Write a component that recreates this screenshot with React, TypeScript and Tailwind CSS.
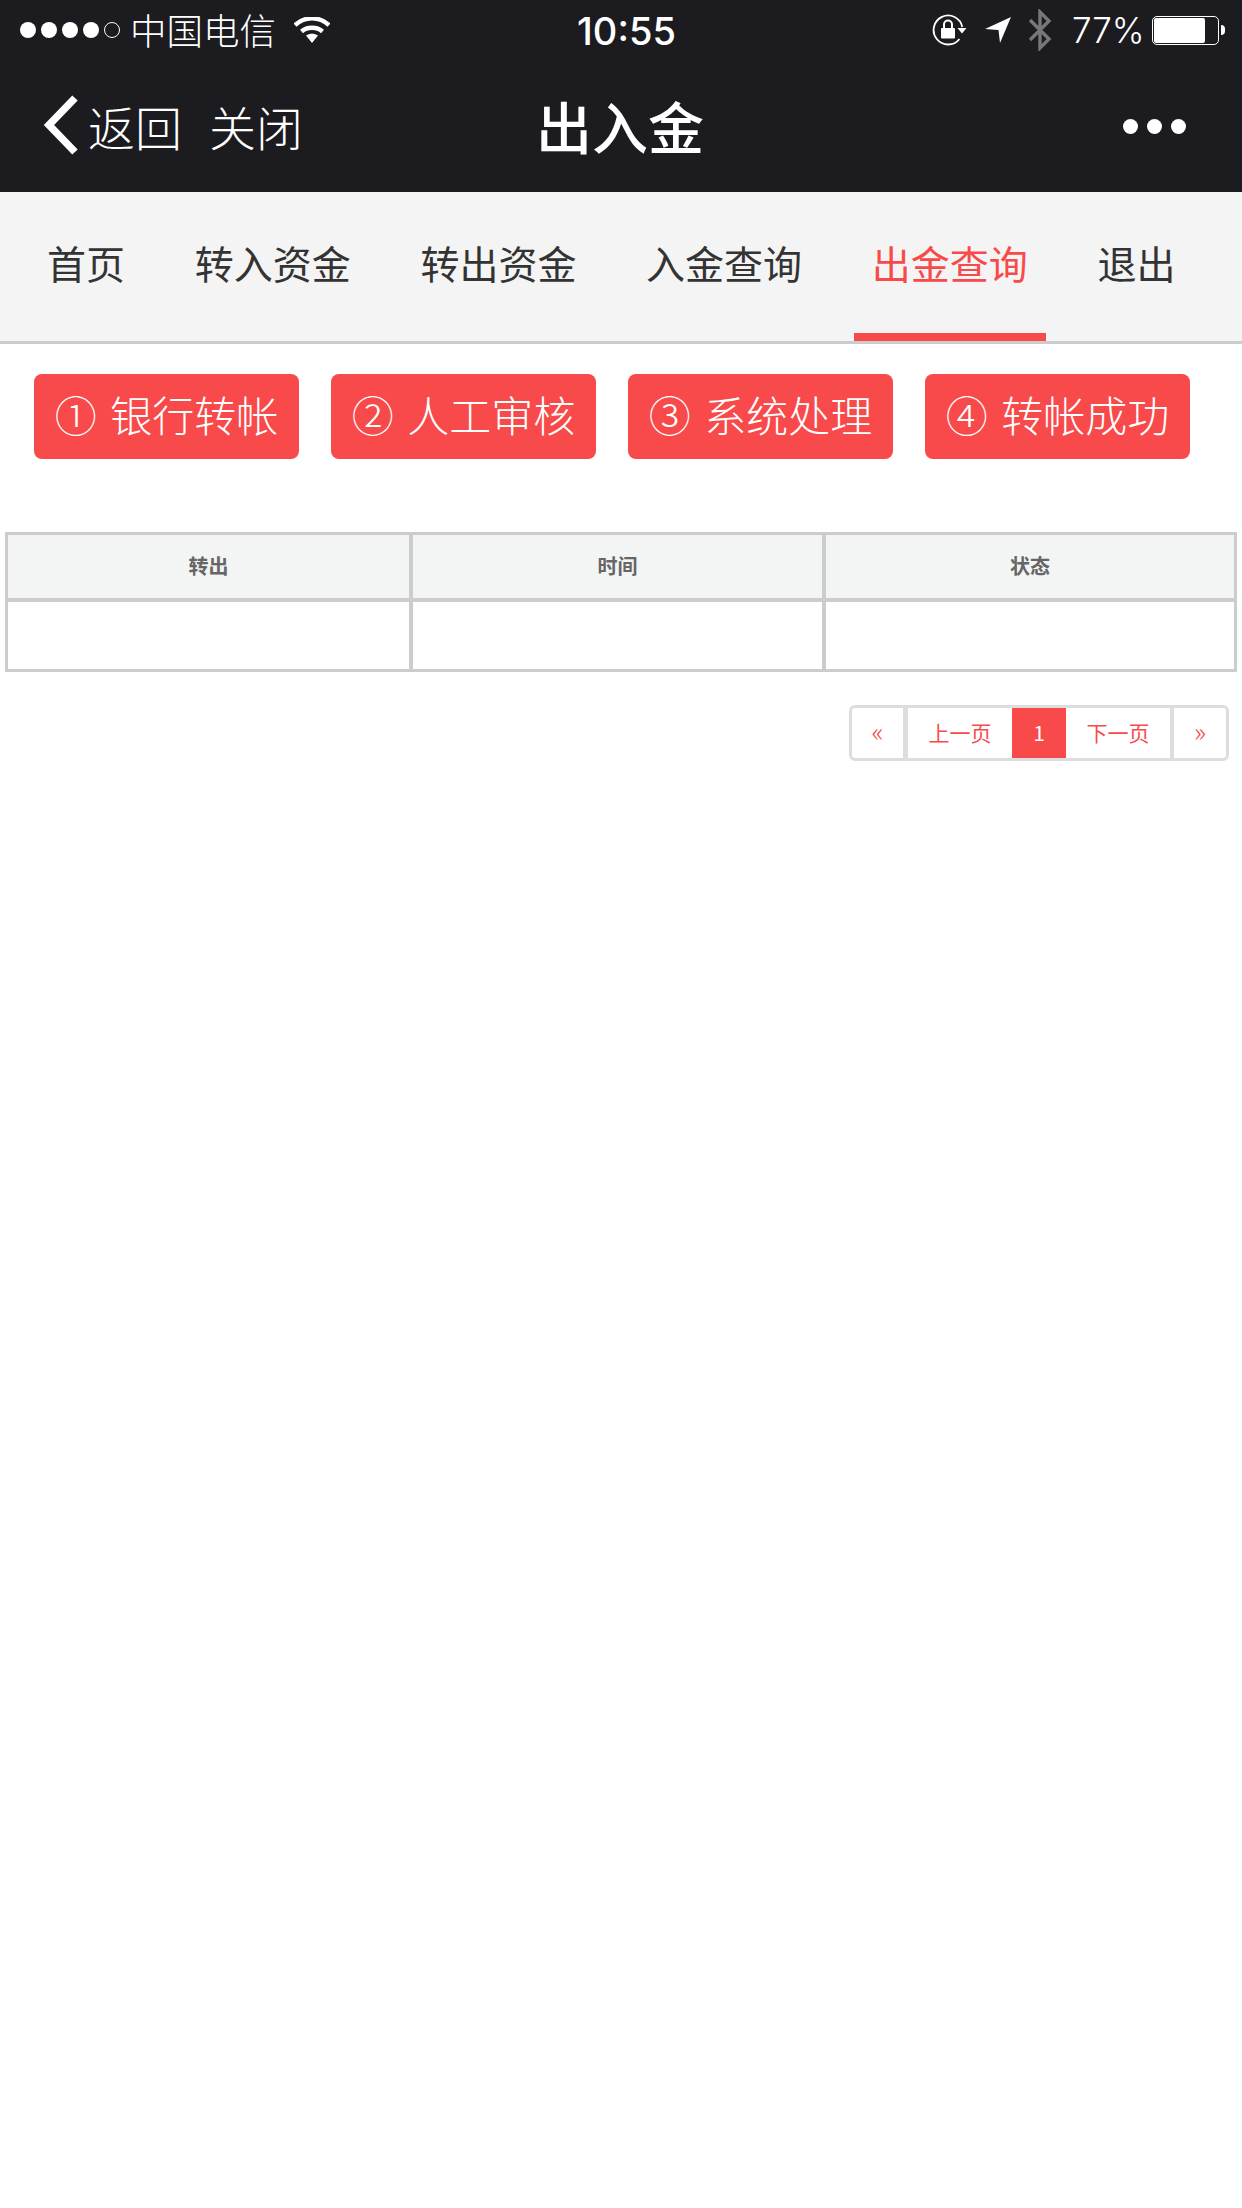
const tabs = ["首页", "转入资金", "转出资金", "入金查询", "出金查询", "退出"];
const steps = ["① 银行转帐", "② 人工审核", "③ 系统处理", "④ 转帐成功"];

const StatusIcons = () => (
  <div className="flex items-center">
    {/* rotation lock */}
    <svg width="36" height="32" viewBox="0 0 36 32">
      <path d="M27.5 25 A14.5 14.5 0 1 1 30.3 13" fill="none" stroke="#fff" strokeWidth="1.8" />
      <path d="M25.5 14 L34.5 14 L30 19.5 Z" fill="#fff" />
      <rect x="9" y="14" width="14" height="10.5" rx="1" fill="#fff" />
      <path d="M12 14 V10.5 a4 4 0 0 1 8 0 V14" fill="none" stroke="#fff" strokeWidth="2" />
    </svg>
    {/* location */}
    <svg width="26" height="26" viewBox="0 0 26 26" className="ml-[17px]">
      <path d="M26 0 L15 26 L13.5 13 L0 12 Z" fill="#fff" />
    </svg>
    {/* bluetooth */}
    <svg width="24" height="42" viewBox="0 0 24 42" className="ml-[17px]">
      <path d="M2 11 L21 30 L12 39 V3 L21 12 L2 31" fill="none" stroke="#77777a" strokeWidth="3.4" />
    </svg>
    <span className="ml-[20px] w-[71px] whitespace-nowrap font-['Inter',sans-serif] text-[35px] font-light leading-none">
      77%
    </span>
    {/* battery */}
    <div className="ml-[9px] flex h-[29px] w-[67px] rounded-[5px] border border-white p-[1px]">
      <div className="h-full w-[51px] rounded-[2px] bg-white" />
    </div>
    <div className="ml-[2px] h-[10px] w-[4px] rounded-r-full bg-white" />
  </div>
);

export default function App() {
  return (
    <div className="min-h-[2208px] bg-white font-['Noto_Sans_CJK_SC',sans-serif]">
      {/* header */}
      <div className="h-[192px] bg-[#1b1b20] text-white">
        <div className="grid h-[60px] grid-cols-3 items-center pl-[20px] pr-[17px]">
          <div className="flex items-center">
            <div className="flex gap-[5px]">
              {[0, 1, 2, 3].map((i) => (
                <div key={i} className="h-[16px] w-[16px] rounded-full bg-white" />
              ))}
              <div className="h-[16px] w-[16px] rounded-full border border-white" />
            </div>
            <span className="ml-[10px] whitespace-nowrap text-[36.5px] font-light leading-none">中国电信</span>
            <svg width="36" height="26" viewBox="0 0 36 26" className="ml-[18px]">
              <path d="M1 8 C11 -1 25 -1 35 8" fill="none" stroke="#fff" strokeWidth="4.4" />
              <path d="M7.5 14.5 C13 9.5 23 9.5 28.5 14.5" fill="none" stroke="#fff" strokeWidth="4.4" />
              <path d="M12 18.5 C15.5 16 20.5 16 24 18.5 L18 26 Z" fill="#fff" />
            </svg>
          </div>
          <div className="pl-[8px] pt-[2px] text-center font-['Inter',sans-serif] text-[38px] font-medium leading-none">
            10:55
          </div>
          <div className="flex justify-end">
            <StatusIcons />
          </div>
        </div>
        <div className="grid h-[132px] grid-cols-3 items-center px-[43px] pb-[2px]">
          <div className="flex items-center">
            <svg width="36" height="60" viewBox="0 0 36 60">
              <path d="M32 3 L6 30 L32 57" fill="none" stroke="#fff" strokeWidth="7.5" />
            </svg>
            <span className="ml-[9px] whitespace-nowrap text-[47px] font-light leading-none">返回</span>
            <span className="ml-[27px] whitespace-nowrap text-[47px] font-light leading-none">关闭</span>
          </div>
          <div className="pr-[2px] text-center text-[56px] font-medium leading-none">出入金</div>
          <div className="mr-[13px] mt-[3px] flex justify-end gap-[9px]">
            <div className="h-[15px] w-[15px] rounded-full bg-white" />
            <div className="h-[15px] w-[15px] rounded-full bg-white" />
            <div className="h-[15px] w-[15px] rounded-full bg-white" />
          </div>
        </div>
      </div>

      {/* tabs */}
      <div className="flex h-[152px] gap-[33.7px] border-b-[3px] border-[#cccccc] bg-[#f4f4f4] pl-[29px]">
        {tabs.map((tab) => (
          <div
            key={tab}
            className={
              tab === "出金查询"
                ? "flex items-center border-b-[8px] border-[#f84a4a] px-[18px] text-[39px] leading-none text-[#f84a4a]"
                : "flex items-center px-[18px] pb-[8px] text-[39px] leading-none text-[#333333]"
            }
          >
            {tab}
          </div>
        ))}
      </div>

      {/* steps */}
      <div className="mt-[30px] flex gap-[32px] pl-[34px]">
        {steps.map((step) => (
          <div
            key={step}
            className="flex h-[85px] w-[265px] items-center justify-center whitespace-nowrap rounded-[8px] bg-[#f84a4a] pb-[5px] text-[42px] font-light leading-none text-white [word-spacing:4px]"
          >
            {step}
          </div>
        ))}
      </div>

      {/* table */}
      <table className="ml-[5px] mt-[73px] w-[1232px] table-fixed border-separate border-spacing-0 border-[3px] border-[#cccccc]">
        <colgroup>
          <col className="w-[401px]" />
          <col className="w-[413px]" />
          <col className="w-[412px]" />
        </colgroup>
        <thead>
          <tr className="h-[67px] bg-[#f3f5f4]">
            {["转出", "时间", "状态"].map((h) => (
              <th
                key={h}
                className="border-b-[4px] border-l-[4px] border-[#cccccc] pb-[2px] text-[20px] font-bold text-[#666666] first:border-l-0"
              >
                {h}
              </th>
            ))}
          </tr>
        </thead>
        <tbody>
          <tr className="h-[67px]">
            <td className="border-l-0" />
            <td className="border-l-[4px] border-[#cccccc]" />
            <td className="border-l-[4px] border-[#cccccc]" />
          </tr>
        </tbody>
      </table>

      {/* pagination */}
      <div className="mt-[33px] flex justify-end pr-[13px]">
        <div className="flex h-[56px] overflow-hidden rounded-[6px] border-[3px] border-[#dddddd] text-[21px] leading-none text-[#f84a4a]">
          <div className="flex w-[56px] items-center justify-center border-r-[5px] border-[#dddddd] pb-[5px] text-[27px] font-light">«</div>
          <div className="flex w-[104px] items-center justify-center pb-[2px]">上一页</div>
          <div className="-my-[3px] flex w-[54px] items-center justify-center bg-[#f84a4a] pb-[2px] text-white">1</div>
          <div className="flex w-[108px] items-center justify-center border-r-[4px] border-[#dddddd] pb-[2px]">下一页</div>
          <div className="flex w-[52px] items-center justify-center pb-[5px] text-[27px] font-light">»</div>
        </div>
      </div>
    </div>
  );
}
